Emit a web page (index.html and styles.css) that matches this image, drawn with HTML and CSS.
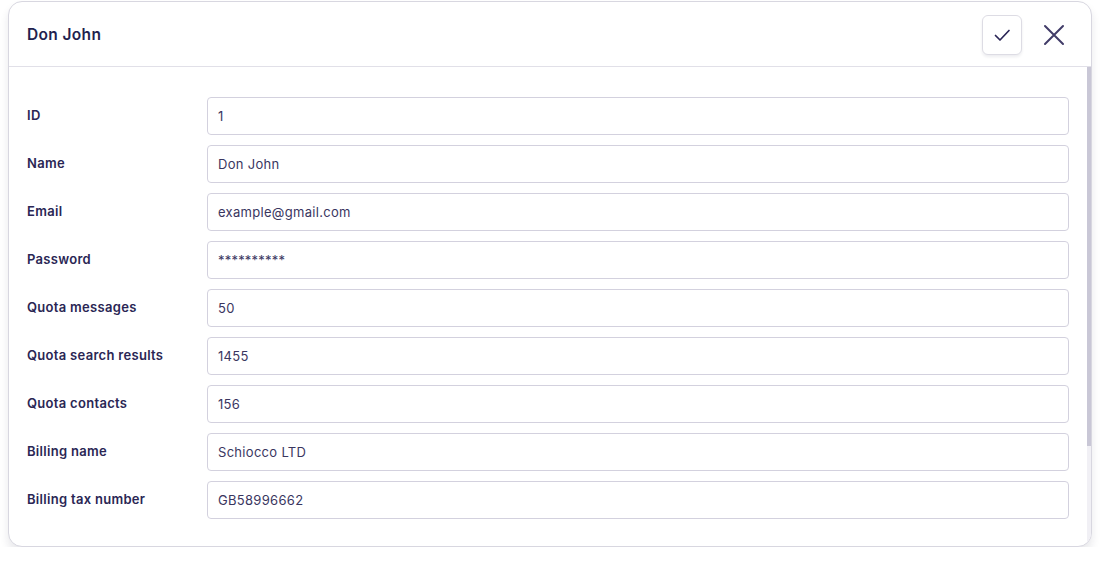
FILE: index.html
```html
<!DOCTYPE html>
<html lang="en">
<head>
<meta charset="utf-8">
<title>Don John</title>
<link rel="stylesheet" href="styles.css">
</head>
<body>
<div class="card">
  <div class="header">
    <h1 class="title">Don John</h1>
    <div class="actions">
      <button class="btn-save" type="button" aria-label="Save">
        <svg width="20" height="20" viewBox="0 0 20 20"><path d="M3.5 10.5 L8 15 L17 5.5" fill="none" stroke="#2a2556" stroke-width="1.7" stroke-linecap="round" stroke-linejoin="round"/></svg>
      </button>
      <button class="btn-close" type="button" aria-label="Close">
        <svg width="22" height="22" viewBox="0 0 22 22"><path d="M2 2 L20 20 M20 2 L2 20" fill="none" stroke="#413c68" stroke-width="2" stroke-linecap="round"/></svg>
      </button>
    </div>
  </div>
  <div class="body">
    <form class="form">
      <label class="label">ID</label><input class="input" value="1">
      <label class="label">Name</label><input class="input" value="Don John">
      <label class="label">Email</label><input class="input" value="example@gmail.com">
      <label class="label">Password</label><input class="input pw" value="**********">
      <label class="label">Quota messages</label><input class="input" value="50">
      <label class="label">Quota search results</label><input class="input" value="1455">
      <label class="label">Quota contacts</label><input class="input" value="156">
      <label class="label">Billing name</label><input class="input" value="Schiocco LTD">
      <label class="label">Billing tax number</label><input class="input" value="GB58996662">
    </form>
    <div class="scroll-track"><div class="scroll-thumb"></div></div>
  </div>
</div>
</body>
</html>
```
FILE: styles.css
```css
* { box-sizing: border-box; }
html, body { background: #ffffff; }
body {
  margin: 0;
  padding: 1px 9px 0 8px;
  font-family: Inter, "Noto Sans", sans-serif;
  color: #2a2654;
}
.card {
  width: 1084px;
  height: 546px;
  border: 1px solid #d8d7e0;
  border-radius: 14px;
  background: #fff;
  box-shadow: 0 6px 8px rgba(30, 30, 60, 0.1);
  overflow: hidden;
  display: flex;
  flex-direction: column;
}
.header {
  height: 65px;
  flex: none;
  border-bottom: 1px solid #e1e0e8;
  display: flex;
  align-items: center;
  justify-content: space-between;
  padding: 0 25px 0 18px;
}
.title {
  margin: 0;
  font-size: 15.5px;
  font-weight: 600;
  color: #231f4f;
  letter-spacing: 0.35px;
}
.actions {
  display: flex;
  align-items: center;
  gap: 20px;
  padding-top: 2px;
}
.btn-save {
  width: 40px;
  height: 40px;
  border: 1px solid #dddce4;
  border-radius: 6px;
  background: #fff;
  box-shadow: 0 2px 3px rgba(30, 30, 60, 0.08);
  display: flex;
  align-items: center;
  justify-content: center;
  padding: 0;
}
.btn-close {
  width: 24px;
  height: 24px;
  border: 0;
  background: transparent;
  padding: 0;
  display: flex;
  align-items: center;
  justify-content: center;
}
.body {
  flex: 1;
  position: relative;
  padding: 30px 22px 0 18px;
}
.form {
  display: grid;
  grid-template-columns: 180px 862px;
  grid-auto-rows: 38px;
  row-gap: 10px;
  align-items: center;
}
.label {
  font-size: 13px;
  font-weight: 600;
  color: #2a2654;
  margin-top: -2px;
  letter-spacing: 0.3px;
}
.input {
  height: 38px;
  width: 100%;
  border: 1px solid #d3d1de;
  border-radius: 4px;
  padding: 0 10px;
  font-family: Inter, "Noto Sans", sans-serif;
  font-size: 13px;
  letter-spacing: 0.3px;
  color: #3a365f;
  background: #fff;
  outline: none;
}
.input.pw { letter-spacing: 0.2px; }
.scroll-track {
  position: absolute;
  right: 0;
  top: 0;
  bottom: 0;
  width: 4px;
  background: #f1f0f5;
}
.scroll-thumb {
  position: absolute;
  left: 0;
  right: 0;
  top: 0;
  height: 379px;
  background: #c9c7d6;
}
```
